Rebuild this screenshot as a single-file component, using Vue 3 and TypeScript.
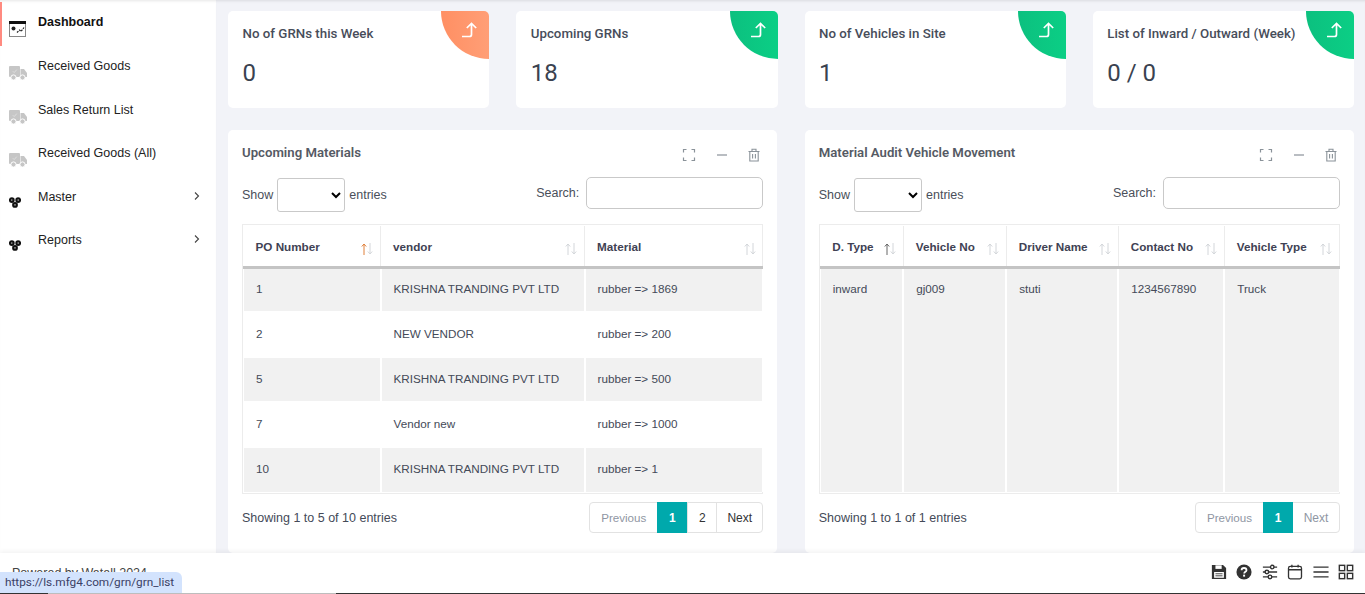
<template>
  <div class="shell">
    <div class="body">
      <aside class="sidebar">
        <a
          v-for="item in menu"
          :key="item.label"
          :class="['menu-item', { active: item.active }]"
        >
          <span class="menu-label">{{ item.label }}</span>
          <svg v-if="item.arrow" class="menu-arrow" width="10" height="10" viewBox="0 0 10 10" fill="none">
            <path d="M4 1.5L7.5 5L4 8.5" stroke="#444" stroke-width="1.1" />
          </svg>
          <svg v-if="item.icon === 'dash'" class="menu-icon" width="17" height="16" viewBox="0 0 17 16" fill="none">
            <rect x="0.5" y="0.5" width="16" height="15" fill="#fff" stroke="#888" />
            <rect x="0" y="0" width="17" height="3" fill="#111" />
            <circle cx="4.5" cy="7.5" r="2" fill="#222" />
            <path d="M8 11.5L10.5 9L12 10.5L15 6.5" stroke="#222" stroke-width="1.2" stroke-dasharray="2 1" />
          </svg>
          <svg v-else-if="item.icon === 'truck'" class="menu-icon" width="18" height="16" viewBox="0 0 18 16">
            <rect x="0" y="1" width="11" height="11" rx="1" fill="#c6c6c6" />
            <path d="M11.5 4H15L18 8V12H11.5Z" fill="#c6c6c6" />
            <circle cx="4.5" cy="12.5" r="2.6" fill="#c6c6c6" stroke="#fff" />
            <circle cx="13.5" cy="12.5" r="2.6" fill="#c6c6c6" stroke="#fff" />
            <path d="M3.8 6.2L5.2 7.6L7.8 4.6" stroke="#ddd" fill="none" />
          </svg>
          <svg v-else class="menu-icon hub" width="12" height="11" viewBox="1 2.5 15 13">
            <g fill="#111">
              <circle cx="4.5" cy="6" r="3.6" />
              <circle cx="12.5" cy="6" r="3.6" />
              <circle cx="8.5" cy="12" r="3.6" />
            </g>
            <g fill="#aaa">
              <circle cx="4.5" cy="6" r="1" />
              <circle cx="12.5" cy="6" r="1" />
              <circle cx="8.5" cy="12" r="1" />
            </g>
          </svg>
        </a>
      </aside>

      <main class="content">
        <section class="stats">
          <div v-for="s in stats" :key="s.title" class="stat-card">
            <div class="stat-title">{{ s.title }}</div>
            <div class="stat-value">{{ s.value }}</div>
            <div :class="['stat-corner', s.tone]">
              <svg width="18" height="18" viewBox="0 0 18 18" fill="none">
                <path d="M1 15.5H8.5C10 15.5 10.5 14.8 10.5 13.5V3M5.8 7L10.5 2.5L15.2 7" stroke="#fff" stroke-width="1.7" />
              </svg>
            </div>
          </div>
        </section>

        <section class="panels">
          <div v-for="p in panels" :key="p.title" class="panel">
            <div class="panel-head">
              <h3 class="panel-title">{{ p.title }}</h3>
              <div class="panel-tools">
                <svg width="14" height="14" viewBox="0 0 14 14" fill="none" stroke="#8a9299" stroke-width="1.2">
                  <path d="M1.5 4.5V1.5H4.5M9.5 1.5H12.5V4.5M12.5 9.5V12.5H9.5M4.5 12.5H1.5V9.5" />
                </svg>
                <svg width="14" height="14" viewBox="0 0 14 14" fill="none" stroke="#8a9299" stroke-width="1.2">
                  <path d="M2 7H12" />
                </svg>
                <svg width="14" height="14" viewBox="0 0 14 14" fill="none" stroke="#8a9299" stroke-width="1.1">
                  <path d="M1.5 3.5H12.5M5 3.5V1.2H9V3.5M2.8 3.5V13H11.2V3.5M5.6 6V10.5M8.4 6V10.5" />
                </svg>
              </div>
            </div>

            <div class="controls">
              <label class="ctl-show">
                Show
                <select class="ctl-select"></select>
                entries
              </label>
              <label class="ctl-search">
                Search:
                <input class="ctl-input" type="text" />
              </label>
            </div>

            <div class="table-wrap">
              <table class="grid-table">
                <colgroup>
                  <col v-for="c in p.columns" :key="c.name" :style="{ width: c.width + 'px' }" />
                </colgroup>
                <thead>
                  <tr>
                    <th v-for="(c, i) in p.columns" :key="c.name">
                      {{ c.name }}
                      <svg class="sort" width="12" height="12" viewBox="0 0 12 12" fill="none">
                        <path
                          d="M3 12V1M0.8 3.5L3 1L5.2 3.5"
                          :stroke="i === 0 ? p.sortColor : '#d3d6da'"
                        />
                        <path d="M9 0V11M6.8 8.5L9 11L11.2 8.5" stroke="#d3d6da" />
                      </svg>
                    </th>
                  </tr>
                </thead>
                <tbody>
                  <tr
                    v-for="(row, r) in p.rows"
                    :key="r"
                    :class="{ odd: r % 2 === 0 }"
                    :style="{ height: p.rowHeight + 'px' }"
                  >
                    <td v-for="(cell, k) in row" :key="k">{{ cell }}</td>
                  </tr>
                </tbody>
              </table>
            </div>

            <div class="panel-foot">
              <span class="info">{{ p.info }}</span>
              <div class="pager">
                <span class="pg prev muted">Previous</span>
                <span v-for="n in p.pages" :key="n" :class="['pg', 'num', { current: n === 1 }]">{{ n }}</span>
                <span :class="['pg', 'next', { muted: p.pages === 1 }]">Next</span>
              </div>
            </div>
          </div>
        </section>
      </main>
    </div>

    <footer class="footer">
      <span class="powered">Powered by Watall 2024</span>
      <div class="foot-icons">
        <svg width="16" height="16" viewBox="0 0 18 18">
          <path d="M1 1H13.5L17 4.5V17H1Z" fill="#333" />
          <rect x="5" y="1.5" width="7" height="4" fill="#fff" />
          <rect x="3.5" y="9" width="11" height="6.5" fill="#fff" />
          <path d="M5 11H13M5 13.3H13" stroke="#333" />
        </svg>
        <svg width="16" height="16" viewBox="0 0 18 18">
          <circle cx="9" cy="9" r="8.5" fill="#333" />
          <path d="M6.3 7C6.3 5.4 7.5 4.5 9 4.5C10.6 4.5 11.8 5.4 11.8 6.9C11.8 8.8 9.2 8.8 9.2 10.8" stroke="#fff" stroke-width="2" fill="none" />
          <rect x="8" y="12" width="2.2" height="2.2" fill="#fff" />
        </svg>
        <svg width="16" height="16" viewBox="0 0 18 18" fill="none" stroke="#333" stroke-width="1.6">
          <path d="M1 3.5H17M1 9H17M1 14.5H17" />
          <circle cx="11.5" cy="3.5" r="2" fill="#fff" />
          <circle cx="5.5" cy="9" r="2" fill="#fff" />
          <circle cx="9" cy="14.5" r="2" fill="#fff" />
        </svg>
        <svg width="16" height="16" viewBox="0 0 18 18" fill="none" stroke="#333" stroke-width="1.5">
          <rect x="1.7" y="2.7" width="14.6" height="14" rx="2" />
          <path d="M1.7 6.5H16.3M5.5 0.8V4M12.5 0.8V4" />
        </svg>
        <svg width="16" height="16" viewBox="0 0 18 18" fill="none" stroke="#333" stroke-width="1.6">
          <path d="M0.5 3.5H17.5M0.5 9H17.5M0.5 14.5H17.5" />
        </svg>
        <svg width="16" height="16" viewBox="0 0 18 18" fill="none" stroke="#333" stroke-width="1.6">
          <rect x="1.5" y="1.5" width="6" height="6" />
          <rect x="10.5" y="1.5" width="6" height="6" />
          <rect x="1.5" y="10.5" width="6" height="6" />
          <rect x="10.5" y="10.5" width="6" height="6" />
        </svg>
      </div>
      <div class="status-url">https://ls.mfg4.com/grn/grn_list</div>
    </footer>
  </div>
</template>

<script setup lang="ts">
type Col = { name: string; width: number };

const menu = [
  { label: "Dashboard", icon: "dash", active: true },
  { label: "Received Goods", icon: "truck" },
  { label: "Sales Return List", icon: "truck" },
  { label: "Received Goods (All)", icon: "truck" },
  { label: "Master", icon: "hub", arrow: true },
  { label: "Reports", icon: "hub", arrow: true },
];

const stats = [
  { title: "No of GRNs this Week", value: "0", tone: "orange" },
  { title: "Upcoming GRNs", value: "18", tone: "green" },
  { title: "No of Vehicles in Site", value: "1", tone: "green" },
  { title: "List of Inward / Outward (Week)", value: "0 / 0", tone: "green" },
];

const materialCols: Col[] = [
  { name: "PO Number", width: 137 },
  { name: "vendor", width: 204 },
  { name: "Material", width: 178 },
];

const vehicleCols: Col[] = [
  { name: "D. Type", width: 83 },
  { name: "Vehicle No", width: 103 },
  { name: "Driver Name", width: 112 },
  { name: "Contact No", width: 106 },
  { name: "Vehicle Type", width: 115 },
];

const panels = [
  {
    title: "Upcoming Materials",
    columns: materialCols,
    rowHeight: 45,
    sortColor: "#e0803a",
    rows: [
      ["1", "KRISHNA TRANDING PVT LTD", "rubber => 1869"],
      ["2", "NEW VENDOR", "rubber => 200"],
      ["5", "KRISHNA TRANDING PVT LTD", "rubber => 500"],
      ["7", "Vendor new", "rubber => 1000"],
      ["10", "KRISHNA TRANDING PVT LTD", "rubber => 1"],
    ],
    info: "Showing 1 to 5 of 10 entries",
    pages: 2,
  },
  {
    title: "Material Audit Vehicle Movement",
    columns: vehicleCols,
    rowHeight: 225,
    sortColor: "#666",
    rows: [["inward", "gj009", "stuti", "1234567890", "Truck"]],
    info: "Showing 1 to 1 of 1 entries",
    pages: 1,
  },
];
</script>

<style>
html,
body {
  margin: 0;
  background: #fff;
}
</style>

<style scoped>
.shell {
  height: 594px;
  display: flex;
  flex-direction: column;
  overflow: hidden;
  font-family: "Liberation Sans", Arial, sans-serif;
  font-size: 12px;
  color: #3f4254;
}

.body {
  flex: 1;
  min-height: 0;
  display: flex;
  overflow: hidden;
}

.sidebar {
  width: 216px;
  flex-shrink: 0;
  padding-top: 2px;
  background: #fff;
  box-shadow: inset 0 3px 3px -2px rgba(0, 0, 0, 0.1);
  box-sizing: border-box;
}

.menu-item {
  display: block;
  position: relative;
  height: 43.6px;
  padding: 12px 0 0 38px;
  box-sizing: border-box;
  font-size: 12.5px;
  line-height: 16px;
  color: #222;
}
.menu-item.active {
  font-weight: 700;
  color: #111;
  border-left: 2px solid #ff8a80;
  padding-left: 36px;
  height: 44px;
}
.menu-icon {
  position: absolute;
  left: 9px;
  top: 19px;
}
.menu-icon.hub {
  top: 20px;
}
.menu-item.active .menu-icon {
  left: 7px;
}
.menu-arrow {
  position: absolute;
  right: 15px;
  top: 14px;
}

.content {
  flex: 1;
  min-width: 0;
  padding: 11px 11px 0 12px;
  background: #f2f3f8;
  box-shadow: inset 0 3px 3px -2px rgba(0, 0, 0, 0.1);
  box-sizing: border-box;
}

.stats {
  display: grid;
  grid-template-columns: repeat(4, minmax(0, 1fr));
  gap: 27px;
  margin-bottom: 22px;
}
.stat-card {
  position: relative;
  height: 97px;
  padding: 15px 14.5px;
  background: #fff;
  border-radius: 5px;
  box-sizing: border-box;
  overflow: hidden;
}
.stat-title {
  font-family: Roboto, "Liberation Sans", sans-serif;
  font-size: 13.3px;
  font-weight: 500;
  line-height: 16px;
  color: #474d5a;
}
.stat-value {
  margin-top: 16px;
  font-family: Roboto, "Liberation Sans", sans-serif;
  font-size: 24px;
  line-height: 30px;
  color: #3a4250;
}
.stat-corner {
  position: absolute;
  top: -48px;
  right: -48px;
  width: 96px;
  height: 96px;
  border-radius: 50%;
}
.stat-corner svg {
  position: absolute;
  left: 20px;
  top: 58px;
}
.stat-corner.orange {
  background: linear-gradient(90deg, #ff8f63, #ffae8a);
}
.stat-corner.green {
  background: linear-gradient(90deg, #0cc07f, #0add8b);
}

.panels {
  display: grid;
  grid-template-columns: repeat(2, minmax(0, 1fr));
  gap: 27.5px;
}
.panel {
  height: 423px;
  padding: 14px 14px 0;
  background: #fff;
  border-radius: 5px;
  box-sizing: border-box;
}
.panel-head {
  display: flex;
  justify-content: space-between;
  align-items: flex-start;
  height: 34px;
}
.panel-title {
  margin: 0;
  font-family: Roboto, "Liberation Sans", sans-serif;
  font-size: 13.2px;
  font-weight: 600;
  line-height: 17px;
  color: #555a64;
}
.panel-tools {
  display: flex;
  gap: 18.5px;
  padding: 4px 2px 0 0;
}

.controls {
  display: flex;
  justify-content: space-between;
  align-items: flex-start;
  height: 46px;
}
.ctl-show,
.ctl-search {
  display: flex;
  align-items: center;
  gap: 4px;
  font-size: 12.5px;
  color: #4a4f5a;
}
.ctl-search {
  gap: 7px;
  margin-top: -1px;
}
.ctl-select {
  width: 68px;
  height: 34px;
  background: #fff;
  border: 1px solid #c9c9c9;
  border-radius: 3px;
}
.ctl-input {
  width: 177px;
  height: 32px;
  padding: 0 8px;
  border: 1px solid #c9c9c9;
  border-radius: 5px;
  box-sizing: border-box;
  outline: none;
}

.table-wrap {
  border: 1px solid #ececec;
  padding: 1px 0;
}
.grid-table {
  width: 100%;
  table-layout: fixed;
  border-collapse: collapse;
}
.grid-table th {
  position: relative;
  height: 41px;
  padding: 2px 12px 0;
  font-size: 11.7px;
  font-weight: 700;
  text-align: left;
  color: #3f4254;
  border-left: 1px solid #ececec;
  border-bottom: 3px solid #c4c4c4;
  box-sizing: border-box;
}
.grid-table th:first-child {
  border-left: none;
}
.sort {
  position: absolute;
  right: 7px;
  top: 17px;
}
.grid-table td {
  padding: 14px 12px 0;
  vertical-align: top;
  font-size: 11.7px;
  line-height: 14px;
  color: #444a58;
  border-left: 2px solid #fff;
  border-top: 2px solid #fff;
  box-sizing: border-box;
}
.grid-table td:first-child {
  border-left: 1px solid #fff;
}
.grid-table td:last-child {
  border-right: 1px solid #fff;
}
.grid-table tbody tr:first-child td {
  padding-top: 13px;
}
.grid-table tr.odd td {
  background: #f1f1f1;
}

.panel-foot {
  display: flex;
  justify-content: space-between;
  align-items: center;
  margin-top: 8px;
}
.info {
  font-size: 12.5px;
  color: #444a58;
}
.pager {
  display: flex;
  height: 31px;
  border: 1px solid #e2e2e2;
  border-radius: 4px;
  box-sizing: border-box;
}
.pg {
  display: flex;
  align-items: center;
  justify-content: center;
  font-size: 12px;
  color: #333;
  border-left: 1px solid #e2e2e2;
  box-sizing: border-box;
}
.pg.muted {
  color: #8f96a3;
}
.pg.prev {
  width: 67px;
  font-size: 11.6px;
  border-left: none;
}
.pg.next {
  width: 46px;
}
.pg.num {
  width: 29px;
}
.pg.current {
  width: 30px;
  margin: -1px 0;
  color: #fff;
  font-weight: 700;
  background: #00a9ac;
  border-left: none;
}
.pg.current + .next {
  border-left: none;
}

.footer {
  position: relative;
  height: 41px;
  flex-shrink: 0;
  display: flex;
  justify-content: space-between;
  padding: 11px 11px 0 12px;
  background: #fff;
  box-shadow: 0 -2px 4px rgba(0, 0, 0, 0.05);
  box-sizing: border-box;
}
.footer::after {
  content: "";
  position: absolute;
  left: 0;
  right: 0;
  bottom: 0;
  height: 1px;
  background: linear-gradient(
    90deg,
    #333 48px,
    #bdbdbd 48px,
    #bdbdbd 336px,
    #333 336px
  );
}
.powered {
  padding-top: 2px;
  font-size: 12.5px;
  line-height: 14px;
  color: #444;
}
.foot-icons {
  display: flex;
  gap: 9.4px;
  align-items: flex-start;
}
.status-url {
  position: absolute;
  left: 0;
  bottom: 1px;
  height: 21px;
  padding: 0 8px 0 5px;
  font-family: Roboto, "Liberation Sans", sans-serif;
  font-size: 11.8px;
  line-height: 21px;
  color: #3b3f66;
  background: #d3e3fd;
  border-top-right-radius: 6px;
}
</style>
